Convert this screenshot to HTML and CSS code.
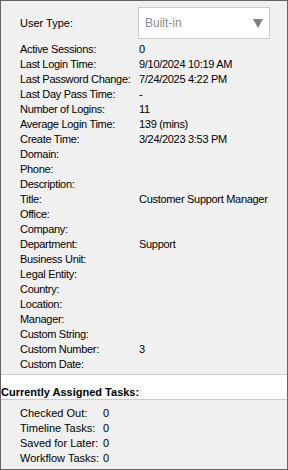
FILE: index.html
```html
<!DOCTYPE html>
<html lang="en">
<head>
    <title>User Details</title>
    <link rel="stylesheet" href="styles.css">
</head>
<body>
    <div class="panel">
        <div class="user-type">
            <span class="label">User Type:</span>
            <div class="select">
                <span>Built-in</span>
                <span class="arrow"></span>
            </div>
        </div>

        <div class="details">
            <span>Active Sessions:</span><span>0</span>
            <span>Last Login Time:</span><span>9/10/2024 10:19 AM</span>
            <span>Last Password Change:</span><span>7/24/2025 4:22 PM</span>
            <span>Last Day Pass Time:</span><span>-</span>
            <span>Number of Logins:</span><span>11</span>
            <span>Average Login Time:</span><span>139 (mins)</span>
            <span>Create Time:</span><span>3/24/2023 3:53 PM</span>
            <span>Domain:</span><span></span>
            <span>Phone:</span><span></span>
            <span>Description:</span><span></span>
            <span>Title:</span><span>Customer Support Manager</span>
            <span>Office:</span><span></span>
            <span>Company:</span><span></span>
            <span>Department:</span><span>Support</span>
            <span>Business Unit:</span><span></span>
            <span>Legal Entity:</span><span></span>
            <span>Country:</span><span></span>
            <span>Location:</span><span></span>
            <span>Manager:</span><span></span>
            <span>Custom String:</span><span></span>
            <span>Custom Number:</span><span>3</span>
            <span>Custom Date:</span><span></span>
        </div>

        <div class="section-head">Currently Assigned Tasks:</div>

        <div class="tasks">
            <span>Checked Out:</span><span>0</span>
            <span>Timeline Tasks:</span><span>0</span>
            <span>Saved for Later:</span><span>0</span>
            <span>Workflow Tasks:</span><span>0</span>
        </div>
    </div>
</body>
</html>
```

FILE: styles.css
```css
body {
    margin: 0;
    font-family: 'Liberation Sans', Arial, sans-serif;
    font-size: 11px;
    color: #000;
}
.panel {
    width: 288px;
    height: 470px;
    box-sizing: border-box;
    border: 1px solid #646464;
    background: #f0f0f0;
    white-space: nowrap;
}
.user-type {
    display: grid;
    grid-template-columns: 118px 132px;
    align-items: center;
    padding: 6px 0 0 19px;
}
.select {
    height: 30px;
    border: 1px solid #cccccc;
    background: #fff;
    color: #8a8a8a;
    font-size: 12px;
    display: flex;
    align-items: center;
    justify-content: space-between;
    padding: 0 6px 0 6px;
}
.arrow {
    width: 0;
    height: 0;
    border-left: 5.5px solid transparent;
    border-right: 5.5px solid transparent;
    border-top: 9px solid #808080;
    margin-top: 1px;
}
.details {
    display: grid;
    grid-template-columns: 119px 1fr;
    grid-auto-rows: 15px;
    align-items: center;
    padding: 2px 0 3px 19px;
    letter-spacing: -0.3px;
}
.section-head {
    background: #fff;
    border-top: 1px solid #cccccc;
    border-bottom: 1px solid #cccccc;
    padding: 11px 0 0 0;
    height: 13px;
    line-height: 13px;
    font-weight: bold;
}
.tasks {
    display: grid;
    grid-template-columns: 83px 1fr;
    grid-auto-rows: 15px;
    align-items: center;
    padding: 5px 0 0 19px;
}
```
